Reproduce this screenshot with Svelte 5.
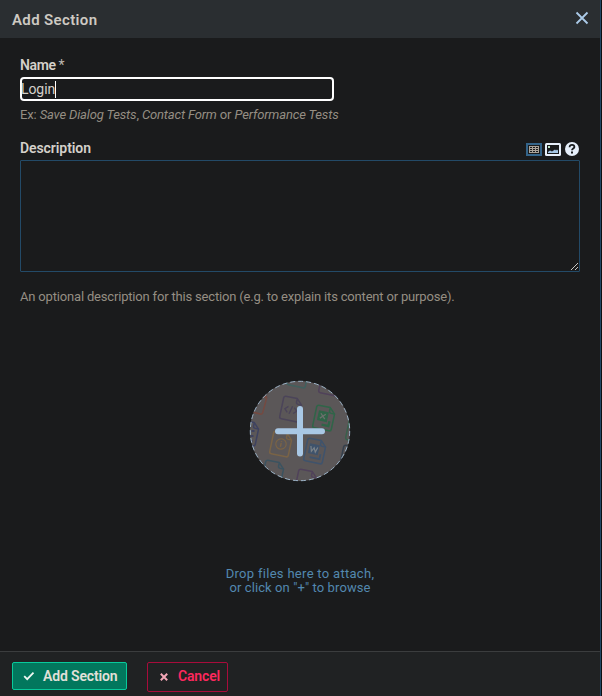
<script>
  let name = $state('Login');
  let description = $state('');
</script>

<div class="page">
  <div class="dialog" role="dialog" aria-label="Add Section">
    <header>
      <h1>Add Section</h1>
      <button class="close" aria-label="Close">
        <svg width="14" height="14" viewBox="0 0 14 14"><path d="M1.5 1.5 12.5 12.5M12.5 1.5 1.5 12.5" stroke="#abcbe8" stroke-width="1.8" fill="none" /></svg>
      </button>
    </header>
    <main>
      <div class="label name-label"><b>Name</b><span class="star">*</span></div>
      <div class="input"><span class="value">{name}</span><i class="caret"></i></div>
      <p class="hint example">Ex: <em>Save Dialog Tests</em>, <em>Contact Form</em> or <em>Performance Tests</em></p>
      <div class="label desc-row">
        <b class="desc">Description</b>
        <div class="tools">
          <svg width="16" height="13" viewBox="0 0 16 13" shape-rendering="crispEdges"><rect width="16" height="13" rx="1.5" fill="#346489" /><rect x="2" y="2" width="12" height="9" fill="#191b1c" /><path d="M3 3h10v7H3z" fill="#aaa298" /><path d="M4 4h2v1H4zM7 4h2v1H7zM10 4h2v1h-2zM4 6h2v1H4zM7 6h2v1H7zM10 6h2v1h-2zM4 8h2v1H4zM7 8h2v1H7zM10 8h2v1h-2z" fill="#191b1c" /></svg>
          <svg width="16" height="13" viewBox="0 0 16 13"><rect width="16" height="13" rx="1.5" fill="#e6effa" /><rect x="2" y="2" width="12" height="9" fill="#191b1c" /><rect x="3" y="3" width="2" height="2" fill="#b8dfc1" /><path d="M3 10V9l2-1.5 2 1 3-2 1 1 1-1 1 1V10z" fill="#a5c6e5" /></svg>
          <svg width="14" height="14" viewBox="0 0 14 14"><circle cx="7" cy="7" r="7" fill="#e6effa" /><path d="M4.6 5.2C4.6 3.6 5.6 2.8 7 2.8s2.4.9 2.4 2.1C9.4 6.5 7 6.5 7 8.3" fill="none" stroke="#16191b" stroke-width="1.8" /><path d="M6 9.5h2v2H6z" fill="#16191b" /></svg>
        </div>
      </div>
      <div class="area">
        {description}
        <svg class="grip" width="9" height="9" viewBox="0 0 9 9" shape-rendering="crispEdges"><path d="M1 8 8 1M5 8 8 5" stroke="#c9c7c3" fill="none" /></svg>
      </div>
      <p class="hint optional">An optional description for this section (e.g. to explain its content or purpose).</p>
      <div class="drop">
        <svg width="102" height="102" viewBox="-1 -1 102 102">
          <defs>
            <clipPath id="disc"><circle cx="50" cy="50" r="50" /></clipPath>
            <g id="file" fill="none" stroke-width="1.5" stroke-linejoin="round"><path d="M-6.5-11.5H4L9.5-6V9.5Q9.5 11.5 7.5 11.5H-7.5Q-9.5 11.5-9.5 9.5V-9.5Q-9.5-11.5-6.5-11.5ZM4-11.5V-8Q4-6 6-6H9.5" /></g>
          </defs>
          <circle cx="50" cy="50" r="50" fill="#5b5758" />
          <g clip-path="url(#disc)">
            <g transform="translate(41 28) rotate(12)" stroke="#4b4459"><use href="#file" /><path d="M-3-2-6 1-3 4M3-2 6 1 3 4M1-3-1 5" fill="none" stroke-width="1.4" /></g>
            <g transform="translate(74 37) rotate(12)" stroke="#2f6548"><use href="#file" /><path d="M-6-6H3V3H-6z" fill="#2f6548" /><path d="M-4-4 1 1M1-4-4 1" stroke="#6b706c" stroke-width="1.3" /><path d="M-1 7H6V2" fill="none" stroke-width="2.2" /></g>
            <g transform="translate(31 63) rotate(12)" stroke="#796346"><use href="#file" /><circle r="5.2" fill="none" stroke-width="1.2" /><path d="M0-1V3M0-3V-2" stroke-width="1.5" /></g>
            <g transform="translate(65 70) rotate(12)" stroke="#3f536c"><use href="#file" /><path d="M-6-6H3V3H-6z" fill="#3f536c" /><path d="M-5-4-3.5 1-1.5-3 .5 1 2-4" fill="none" stroke="#7c8389" stroke-width="1.2" /><path d="M-4 7H6V2" fill="none" stroke-width="1.8" /></g>
            <use href="#file" transform="translate(6 20) rotate(15)" stroke="#754a41" />
            <use href="#file" transform="translate(-2 52) rotate(12)" stroke="#3e4260" /><path d="M3 49v2M2 54v2M1 59v2" stroke="#3e4260" stroke-width="3" />
            <use href="#file" transform="translate(23 92) rotate(12)" stroke="#3b5360" />
            <use href="#file" transform="translate(56 101) rotate(12)" stroke="#50425a" />
            <use href="#file" transform="translate(48 -6) rotate(12)" stroke="#40605e" />
            <use href="#file" transform="translate(80 2) rotate(12)" stroke="#50425a" />
            <use href="#file" transform="translate(101 77) rotate(12)" stroke="#35404d" />
            <use href="#file" transform="translate(107 49) rotate(12)" stroke="#38604b" />
          </g>
          <circle cx="50" cy="50" r="49.7" fill="none" stroke="#a5bfd6" stroke-width=".9" stroke-dasharray="5 3" />
          <path d="M50 28V72.5M28 50.2H72" stroke="#a9c8e5" stroke-width="6" stroke-linecap="round" />
        </svg>
        <p class="drop-text"><span class="line1">Drop files here to attach,</span><br /><span class="line2">or click on "+" to browse</span></p>
      </div>
    </main>
    <footer>
      <button class="add">
        <svg width="12" height="10" viewBox="0 0 12 10"><path d="m1.2 5.2 3 3 6.3-6.5" fill="none" stroke="#eef7f2" stroke-width="1.8" /></svg><span>Add Section</span>
      </button>
      <button class="cancel">
        <svg width="8" height="8" viewBox="0 0 8 8"><path d="m.8.8 6.4 6.4M7.2.8.8 7.2" stroke="#f4a7b7" stroke-width="2" /></svg><span>Cancel</span>
      </button>
    </footer>
  </div>
</div>

<style>
  :global(body) { background: #0d1012; }
  * { box-sizing: border-box; }
  .page { width: 602px; height: 696px; overflow: hidden; font-family: Roboto, 'Liberation Sans', sans-serif; background: #0d1012; }
  .dialog { width: 601px; height: 696px; display: flex; flex-direction: column; background: #1a1b1c; border-right: 1px solid #214766; }
  header { height: 38px; flex: none; display: flex; align-items: center; justify-content: space-between; padding: 0 11px 0 12px; background: #2a2e31; }
  h1 { margin: 1px 0 0; font-size: 15px; line-height: 18px; font-weight: 600; color: #cdc9c2; letter-spacing: .36px; white-space: nowrap; }
  button { font-family: inherit; cursor: pointer; }
  .close { padding: 0; border: 0; background: none; display: flex; margin-top: -2px; }
  main { flex: 1; padding: 19px 20px 0; display: flex; flex-direction: column; }
  .label { display: flex; font-size: 14px; line-height: 17px; color: #d4d0ca; height: 17px; }
  .label b { font-weight: 600; letter-spacing: -.38px; }
  .label .desc { letter-spacing: -.08px; }
  .star { font-size: 14px; margin-left: 3px; color: #bdb7af; }
  .input { margin-top: 3px; width: 314px; height: 24px; border: 2px solid #fff; border-radius: 4px; display: flex; align-items: center; color: #d5d1ca; font-size: 14px; }
  .value { margin-left: -1px; letter-spacing: -.08px; }
  .caret { width: 1px; height: 17px; background: #fff; }
  .hint { margin: 0; font-size: 13px; line-height: 17px; color: #958e83; white-space: nowrap; }
  .example { margin-top: 5px; letter-spacing: -.15px; }
  .desc-row { margin-top: 17px; height: 20px; justify-content: space-between; }
  .tools { display: flex; gap: 3px; padding: 3px 1px 0 0; align-items: flex-start; }
  .tools svg:last-child { margin: -1px 0 0 1px; }
  .area { position: relative; height: 112px; border: 1px solid #234a67; border-radius: 1px; }
  .grip { position: absolute; right: 0; bottom: 0; }
  .optional { margin-top: 16px; letter-spacing: -.18px; }
  .drop { margin-top: 75px; display: flex; flex-direction: column; align-items: center; }
  .drop-text { margin: 85px 0 0; font-size: 13px; line-height: 14px; text-align: center; color: #5388af; white-space: nowrap; }
  .line1 { letter-spacing: .3px; }
  .line2 { letter-spacing: .1px; }
  footer { height: 45px; flex: none; border-top: 1px solid #3b3d3e; background: #202223; padding: 10px 12px; display: flex; align-items: flex-start; gap: 20px; }
  footer button { display: flex; align-items: center; border-radius: 2px; font-weight: 600; font-size: 14px; line-height: 17px; padding: 0; white-space: nowrap; }
  .add { width: 115px; height: 28px; background: #02775d; border: 1px solid #08ca9b; color: #e2e0d9; }
  .add svg { margin: 0 8px 0 10px; }
  .cancel { width: 81px; height: 30px; background: #202223; border: 1px solid #a80c3b; color: #fc285d; }
  .cancel svg { margin: 0 10px 0 12px; }
  .cancel span { margin-top: -2px; }
  footer span { letter-spacing: -.15px; }
</style>
